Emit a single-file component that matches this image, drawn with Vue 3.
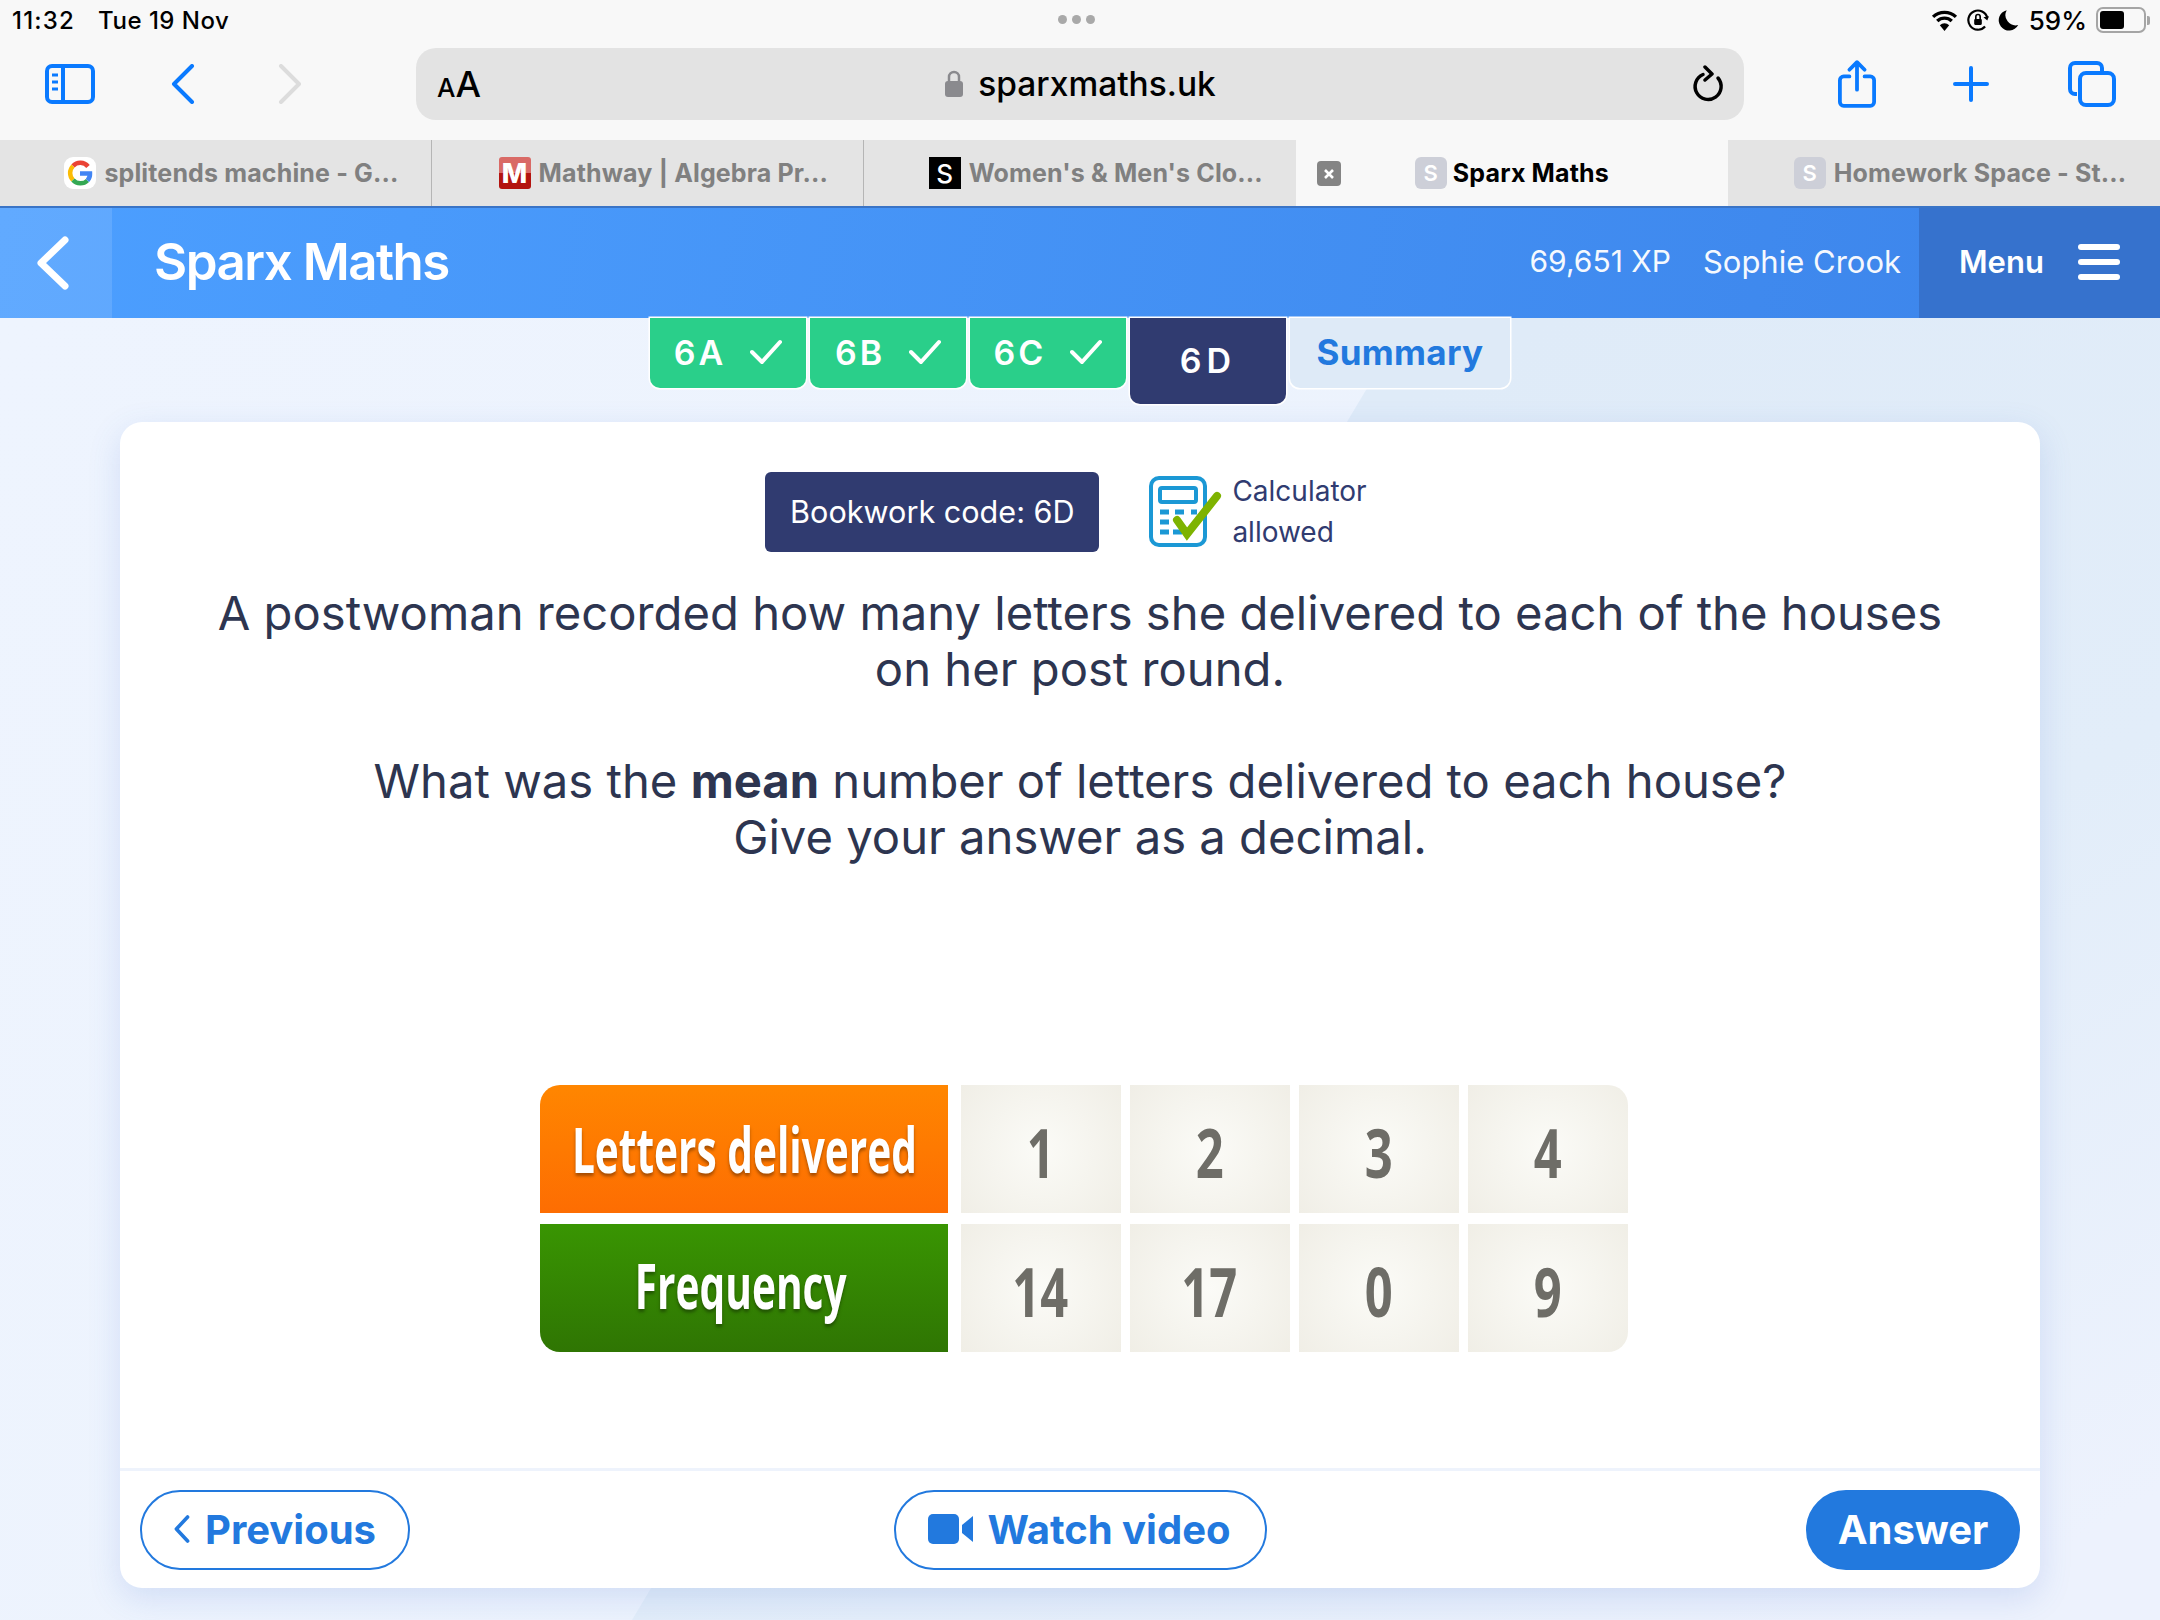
<script setup>
const tabs = [
  { label: '6A', done: true },
  { label: '6B', done: true },
  { label: '6C', done: true },
]
const rows = [
  { title: 'Letters delivered', cls: 'orange', values: ['1', '2', '3', '4'] },
  { title: 'Frequency', cls: 'green', values: ['14', '17', '0', '9'] },
]
</script>

<template>
  <div class="screen">
    <div class="status">
      <div class="time"><span>11:32</span><span>Tue 19 Nov</span></div>
      <div class="dots"><i></i><i></i><i></i></div>
      <div class="sys">
        <svg width="27" height="22" viewBox="0 0 26 21"><path d="M2 7.500a16 16 0 0 1 22 0M6 11.500a10 10 0 0 1 14 0" fill="none" stroke="#000" stroke-width="3.200"/><path d="M13 21l-4.500-5.500a6.500 6.500 0 0 1 9 0z"/></svg>
        <svg width="22" height="24" viewBox="0 0 20 22"><path d="M16.500 17A8.800 8.800 0 1 1 18.500 9" fill="none" stroke="#000" stroke-width="2"/><path d="M15 8.500l3.500 3 1.500-4z"/><rect x="6.500" y="10" width="7" height="5.500" rx="1"/><path d="M8 10V8a2 2 0 0 1 4 0v2" fill="none" stroke="#000" stroke-width="1.500"/></svg>
        <svg width="22" height="23" viewBox="0 0 18 20"><path d="M7 1a9 9 0 1 0 10 13A9 9 0 0 1 7 1z"/></svg>
        <span class="pct">59%</span>
        <div class="battery"><div class="level"></div></div>
        <div class="nub"></div>
      </div>
    </div>

    <div class="toolbar">
      <svg class="tool-a" width="50" height="40" viewBox="0 0 50 40" fill="none" stroke="#0a7aff" stroke-width="4">
        <rect x="2" y="2" width="46" height="36" rx="5"/>
        <path d="M18 2v36"/>
        <path d="M7 11h6M7 18h6M7 25h6" stroke-width="3"/>
      </svg>
      <svg class="tool-b" width="24" height="40" viewBox="0 0 24 40" fill="none" stroke="#0a7aff" stroke-width="4" stroke-linecap="round" stroke-linejoin="round"><path d="M21 2L3 20l18 18"/></svg>
      <svg class="tool-c" width="24" height="40" viewBox="0 0 24 40" fill="none" stroke="#dcdcdc" stroke-width="4" stroke-linecap="round" stroke-linejoin="round"><path d="M3 2l18 18L3 38"/></svg>
      <div class="address">
        <span class="aa"><small>A</small>A</span>
        <span class="host">
          <svg width="20" height="28" viewBox="0 0 20 28"><rect x="1" y="11" width="18" height="16" rx="3" fill="#8a8a8e"/><path d="M5 12V7a5 5 0 0 1 10 0v5" fill="none" stroke="#8a8a8e" stroke-width="2.500"/></svg>
          sparxmaths.uk
        </span>
        <svg class="reload" width="32" height="38" viewBox="0 0 32 38" fill="none" stroke="#000" stroke-width="3.500" stroke-linecap="round"><path d="M11 9.500A13 13 0 1 0 26 13"/><path d="M13 2l7 7-7 6" stroke-linejoin="round"/></svg>
      </div>
      <svg class="tool-d" width="38" height="50" viewBox="0 0 40 50" fill="none" stroke="#0a7aff" stroke-width="4" stroke-linecap="round" stroke-linejoin="round"><path d="M12 17H6a4 4 0 0 0-4 4v23a4 4 0 0 0 4 4h28a4 4 0 0 0 4-4V21a4 4 0 0 0-4-4h-6"/><path d="M20 31V3M12 10l8-8 8 8"/></svg>
      <svg class="tool-e" width="36" height="36" viewBox="0 0 36 36" fill="none" stroke="#0a7aff" stroke-width="4" stroke-linecap="round"><path d="M18 2v32M2 18h32"/></svg>
      <svg class="tool-f" width="48" height="46" viewBox="0 0 48 46" fill="none" stroke="#0a7aff" stroke-width="4"><path d="M9 33H7a5 5 0 0 1-5-5V7a5 5 0 0 1 5-5h22a5 5 0 0 1 5 5v3"/><rect x="12" y="12" width="34" height="32" rx="6"/></svg>
    </div>

    <div class="tabbar">
      <div class="tab">
        <svg class="fav" width="32" height="32" viewBox="0 0 32 32"><rect width="32" height="32" rx="9" fill="#fff"/><path d="M24 9.500a10 10 0 0 0-15-.500" fill="none" stroke="#ea4335" stroke-width="4.500"/><path d="M9 9a10 10 0 0 0 0 14" fill="none" stroke="#fbbc05" stroke-width="4.500"/><path d="M9 23a10 10 0 0 0 14.500 .500" fill="none" stroke="#34a853" stroke-width="4.500"/><path d="M23.500 23.500a10 10 0 0 0 2.500-7H16" fill="none" stroke="#4285f4" stroke-width="4.500"/></svg>
        <span>splitends machine - G...</span></div>
      <div class="tab"><span class="fav-m">M</span><span>Mathway | Algebra Pr...</span></div>
      <div class="tab"><span class="fav-s">S</span><span>Women's &amp; Men's Clo...</span></div>
      <div class="tab active">
        <span class="close"><svg width="12" height="12" viewBox="0 0 12 12" fill="none" stroke="#fff" stroke-width="2.600"><path d="M2 2l8 8M10 2l-8 8"/></svg></span>
        <span class="fav-g">S</span><span>Sparx Maths</span>
      </div>
      <div class="tab"><span class="fav-g">S</span><span>Homework Space - St...</span></div>
    </div>

    <header class="head">
      <div class="back">
        <svg width="34" height="54" viewBox="0 0 34 54" fill="none" stroke="#fff" stroke-width="7" stroke-linecap="round" stroke-linejoin="round"><path d="M29 4L5 27l24 23"/></svg>
      </div>
      <div class="brand">Sparx Maths</div>
      <div class="xp">69,651 XP</div>
      <div class="who">Sophie Crook</div>
      <div class="menu">
        <span>Menu</span>
        <div class="burger"><i></i><i></i><i></i></div>
      </div>
    </header>

    <main class="page">
      <div class="shape"></div>
      <nav class="steps">
        <div v-for="t in tabs" :key="t.label" class="step">
          <span>{{ t.label }}</span>
          <svg width="32" height="26" viewBox="0 0 32 26" fill="none" stroke="#fff" stroke-width="4" stroke-linecap="round" stroke-linejoin="round"><path d="M2 13l10 10L30 3"/></svg>
        </div>
        <div class="step current"><span>6D</span></div>
        <div class="step summary">Summary</div>
      </nav>

      <section class="card">
        <div class="body">
          <div class="meta">
            <div class="code">Bookwork code: 6D</div>
            <div class="calc">
              <svg width="74" height="72" viewBox="0 0 74 72">
                <rect x="2" y="2" width="54" height="67" rx="8" fill="none" stroke="#1b98d5" stroke-width="4"/>
                <rect x="11" y="12" width="36" height="14" rx="2" fill="none" stroke="#1b98d5" stroke-width="4"/>
                <path d="M11 36h9M26 36h9M42 36h6M11 46h9M11 56h9M24 56h9" stroke="#1b98d5" stroke-width="5"/>
                <path d="M28 44l10 14L68 20" fill="none" stroke="#7eb300" stroke-width="8" stroke-linecap="round"/>
              </svg>
              <div class="calc-text">Calculator<br>allowed</div>
            </div>
          </div>

          <div class="q">
            <p>A postwoman recorded how many letters she delivered to each of the houses<br>on her post round.</p>
            <p>What was the <b>mean</b> number of letters delivered to each house?<br>Give your answer as a decimal.</p>
          </div>

          <div class="table">
            <div v-for="r in rows" :key="r.title" class="row">
              <div class="label" :class="r.cls"><span>{{ r.title }}</span></div>
              <div v-for="(v, i) in r.values" :key="i" class="cell"><span>{{ v }}</span></div>
            </div>
          </div>
        </div>

        <footer class="foot">
          <button class="btn prev">
            <svg width="20" height="36" viewBox="0 0 20 36" fill="none" stroke="#2279de" stroke-width="4.500" stroke-linecap="round" stroke-linejoin="round"><path d="M17 3L3 18l14 15"/></svg>
            Previous
          </button>
          <button class="btn watch">
            <svg width="46" height="30" viewBox="0 0 46 30"><rect width="31" height="30" rx="5" fill="#2279de"/><path d="M34 11l11-9v26l-11-9z" fill="#2279de"/></svg>
            Watch video
          </button>
          <button class="btn solid">Answer</button>
        </footer>
      </section>
    </main>
  </div>
</template>

<style>
html, body { margin: 0; background: #edf3fd; }
</style>

<style scoped>
.screen {
  width: 2160px;
  height: 1620px;
  overflow: hidden;
  display: flex;
  flex-direction: column;
  font-family: "Inter", "Liberation Sans", sans-serif;
  background: #edf3fd;
}
.status {
  height: 40px;
  background: #f8f8f8;
  display: flex;
  align-items: center;
  justify-content: space-between;
  padding: 0 10px 0 12px;
  font-size: 24px;
  font-weight: 500;
  color: #000;
  position: relative;
}
.time { display: flex; gap: 23px; }
.time span:first-child { letter-spacing: 1.200px; }
.time span:last-child { letter-spacing: .500px; }
.dots { display: flex; gap: 5px; position: absolute; left: 1058px; top: 15px; }
.dots i { width: 9px; height: 9px; border-radius: 50%; background: #a9a9a9; }
.sys { display: flex; align-items: center; gap: 9px; }
.pct { margin: 0; font-size: 26px; }
.battery {
  width: 50px;
  height: 26px;
  border: 2px solid #a5a5a5;
  border-radius: 7px;
  box-sizing: border-box;
  padding: 2px;
}
.level { width: 58%; height: 100%; background: #000; border-radius: 3px; }
.nub { width: 3px; height: 9px; background: #a5a5a5; margin-left: -8px; border-radius: 0 2px 2px 0; }

.toolbar {
  height: 100px;
  background: #f8f8f8;
  display: flex;
  align-items: center;
  position: relative;
  padding-bottom: 12px;
  box-sizing: border-box;
}
.tool-a { margin-left: 45px; }
.tool-b { margin-left: 76px; }
.tool-c { margin-left: 83px; }
.address {
  margin-left: 114px;
  width: 1328px;
  height: 72px;
  background: #e3e3e3;
  border-radius: 20px;
  display: flex;
  align-items: center;
  justify-content: center;
  position: relative;
}
.aa { position: absolute; left: 21px; font-size: 36px; font-weight: 500; color: #000; }
.aa small { font-size: 26px; }
.host { display: flex; align-items: center; gap: 14px; font-size: 33.500px; font-weight: 500; color: #000; }
.reload { position: absolute; right: 20px; }
.tool-d { margin-left: 94px; }
.tool-e { margin-left: 77px; }
.tool-f { margin-left: 79px; }

.tabbar {
  height: 66px;
  display: flex;
  background: #e4e4e4;
}
.tab {
  width: 432.500px;
  box-sizing: border-box;
  display: flex;
  align-items: center;
  justify-content: center;
  gap: 8px;
  padding-left: 32px;
  font-size: 25px;
  letter-spacing: .15px;
  font-weight: 700;
  color: #808080;
  white-space: nowrap;
  border-right: 1px solid #b5b5b5;
  position: relative;
}
.tab:nth-child(3), .tab.active, .tab:last-child { border-right: none; }
.tab.active { background: #f8f8f8; color: #000; width: 433px; gap: 6px; padding-left: 0; }
.fav-m {
  width: 32px; height: 32px; border-radius: 3px;
  background: linear-gradient(#d96a66 50%, #b3140f 50%);
  color: #fff; display: flex; align-items: center; justify-content: center;
  font-size: 27px; font-weight: 800;
}
.fav-s {
  width: 32px; height: 32px; background: #000; color: #fff;
  display: flex; align-items: center; justify-content: center; font-size: 26px; font-weight: 500;
}
.fav-g {
  width: 32px; height: 32px; border-radius: 6px; background: #cdcfd8; color: #fff;
  display: flex; align-items: center; justify-content: center; font-size: 22px; font-weight: 600;
}
.close {
  position: absolute; left: 21px; top: 21px;
  width: 24px; height: 25px; border-radius: 4px;
  background: #848484;
  display: flex; align-items: center; justify-content: center;
}

.head {
  height: 112px;
  background: linear-gradient(100deg, #4c9fff, #3c84ea);
  border-top: 2px solid #3a74c6;
  box-sizing: border-box;
  display: flex;
  align-items: center;
  color: #fff;
}
.back {
  width: 112px;
  height: 100%;
  background: rgba(255, 255, 255, 0.12);
  display: flex;
  align-items: center;
  padding-left: 36px;
  box-sizing: border-box;
}
.brand { margin: -4px 0 0 42px; font-size: 51px; font-weight: 600; letter-spacing: -1.500px; flex: 1; }
.xp { font-size: 30px; font-weight: 400; margin: -4px 32px 0 0; opacity: .95; }
.who { font-size: 31px; font-weight: 400; margin: -4px 18px 0 0; opacity: .95; }
.menu {
  width: 241px;
  height: 100%;
  background: #3672cd;
  display: flex;
  align-items: center;
  padding-left: 40px;
  box-sizing: border-box;
  gap: 34px;
  font-size: 31px;
  font-weight: 600;
}
.menu span { margin-top: -4px; }
.burger { display: flex; flex-direction: column; gap: 9px; margin-top: -2px; }
.burger i { display: block; width: 42px; height: 6px; background: #fff; border-radius: 3px; }

.page {
  flex: 1;
  position: relative;
  display: flex;
  flex-direction: column;
  align-items: center;
  background: linear-gradient(120deg, #eef4fe, #ebf2fc);
}
.shape {
  position: absolute;
  inset: 0;
  background: linear-gradient(150deg, #dfebf8 35%, #e2edf9 65%, #edf2fd 95%);
  clip-path: polygon(1409px 0, 2160px 0, 2160px 1302px, 632px 1302px, 1366px 72px);
}
.steps {
  position: relative;
  display: flex;
  gap: 4px;
  height: 104px;
  align-items: flex-start;
}
.step {
  width: 156px;
  height: 70px;
  box-sizing: border-box;
  background: #2acf8a;
  border-radius: 0 0 10px 10px;
  box-shadow: 0 0 0 1.500px #fff;
  display: flex;
  align-items: center;
  justify-content: center;
  gap: 24px;
  color: #fff;
  font-size: 34px;
  font-weight: 600;
  letter-spacing: 3px;
  padding-bottom: 2px;
}
.step.current { height: 86px; background: #303b70; padding: 0 0 2px; letter-spacing: 5px; }
.step.summary {
  width: 220px;
  background: #deeaf7;
  color: #2279de;
  letter-spacing: .3px;
  padding-bottom: 2px;
  font-size: 35px;
  font-weight: 700;
}
.card {
  position: relative;
  width: 1920px;
  height: 1166px;
  background: #fff;
  border-radius: 22px;
  box-shadow: 0 10px 32px rgba(70, 110, 210, 0.17);
  display: flex;
  flex-direction: column;
}
.body { flex: 1; display: flex; flex-direction: column; align-items: center; }
.meta { display: flex; align-items: center; margin-top: 49px; margin-left: 6px; }
.code {
  width: 334px;
  height: 80px;
  margin-left: -34px;
  background: #303b70;
  color: #fff;
  border-radius: 6px;
  display: flex;
  align-items: center;
  justify-content: center;
  font-size: 30.600px;
  padding-bottom: 2px;
  box-sizing: border-box;
}
.calc { display: flex; align-items: center; margin-left: 50px; }
.calc-text { margin-left: 9px; color: #303b70; font-size: 28px; line-height: 41px; }
.q {
  margin-top: 32px;
  text-align: center;
  color: #2d3550;
  font-size: 47.200px;
  line-height: 56px;
}
.q p { margin: 0 0 56px; }
.q b { font-weight: 700; }
.table {
  margin-top: 164px;
  display: flex;
  flex-direction: column;
  gap: 11px;
  margin-left: 8px;
}
.row { display: flex; }
.label {
  width: 408px;
  height: 128px;
  display: flex;
  align-items: center;
  justify-content: center;
  color: #fff;
  margin-right: 13px;
  font-family: "Open Sans", sans-serif;
  font-size: 62px;
  font-weight: 700;
  text-shadow: 0 3px 4px rgba(0, 0, 0, 0.35);
}
.label span { display: inline-block; transform: scaleX(.655); white-space: nowrap; }
.green span { margin: -6px 6px 0 0; }
.orange { background: linear-gradient(#ff8600, #fd6d02); border-radius: 20px 0 0 0; }
.green { background: linear-gradient(#399502, #2f7503); border-radius: 0 0 0 20px; }
.cell {
  width: 160px;
  height: 128px;
  margin-right: 9px;
  background: radial-gradient(circle, #fbfbf7, #f0eee6);
  display: flex;
  align-items: center;
  justify-content: center;
  color: #6e6d67;
  font-family: "Open Sans", sans-serif;
  font-size: 68px;
  font-weight: 700;
}
.cell span { display: inline-block; transform: scaleX(.72); padding: 4px 2px 0 0; }
.cell:last-child { margin-right: 0; }
.row:first-child .cell:last-child { border-radius: 0 20px 0 0; }
.row:last-child .cell:last-child { border-radius: 0 0 20px 0; }
.foot {
  height: 120px;
  border-top: 3px solid #eef3fc;
  box-sizing: border-box;
  display: grid;
  grid-template-columns: 1fr auto 1fr;
  align-items: start;
  padding: 19px 20px 0;
}
.btn {
  height: 80px;
  padding: 0 32px;
  background: #fff;
  border: 2px solid #2279de;
  border-radius: 40px;
  color: #2279de;
  font-family: inherit;
  font-size: 40px;
  font-weight: 650;
  display: flex;
  align-items: center;
  gap: 12px;
  box-sizing: border-box;
  padding-bottom: 2px;
}
.prev { justify-self: start; width: 270px; gap: 15px; }
.watch { justify-self: center; width: 373px; gap: 14px; }
.btn.solid { justify-self: end; background: #2279de; color: #fff; width: 214px; justify-content: center; padding: 0 0 2px; }
</style>
